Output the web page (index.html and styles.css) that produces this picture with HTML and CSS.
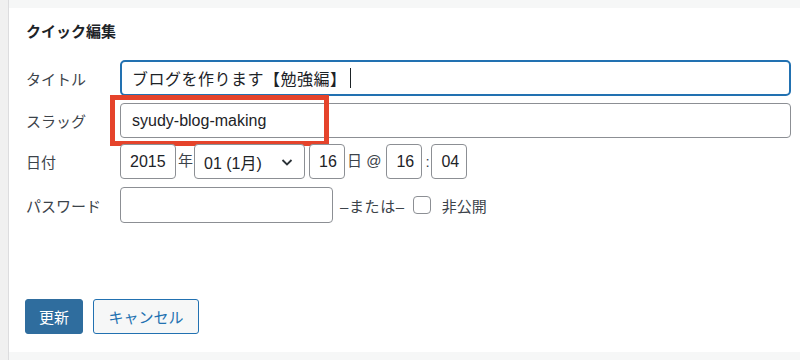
FILE: index.html
```html
<!DOCTYPE html>
<html lang="ja">
<head>
<meta charset="utf-8">
<title>クイック編集</title>
<link rel="stylesheet" href="styles.css">
</head>
<body>
<div class="page">
  <div class="side"></div>
  <div class="main">
    <div class="band"></div>
    <div class="panel">
      <h2 class="title">クイック編集</h2>
      <div class="row row-title">
        <span class="label">タイトル</span>
        <div class="field field-focus">ブログを作ります【勉強編】<span class="caret"></span></div>
      </div>
      <div class="row row-slug">
        <span class="label">スラッグ</span>
        <div class="field">syudy-blog-making</div>
        <div class="highlight"></div>
      </div>
      <div class="row row-date">
        <span class="label">日付</span>
        <div class="dates">
          <div class="field small w-year">2015</div>
          <span class="unit">年</span>
          <div class="field small select">01 (1月)
            <svg class="chev" width="14" height="14" viewBox="0 0 14 14"><path d="M2.5 5 L7 9.5 L11.5 5" fill="none" stroke="#2c3338" stroke-width="1.8"/></svg>
          </div>
          <div class="field small w-2">16</div>
          <span class="unit">日 @</span>
          <div class="field small w-2 ml">16</div>
          <span class="colon">:</span>
          <div class="field small w-2">04</div>
        </div>
      </div>
      <div class="row row-pass">
        <span class="label">パスワード</span>
        <div class="pass">
          <div class="field w-pass"></div>
          <span class="or">–または–</span>
          <span class="check"></span>
          <span class="priv">非公開</span>
        </div>
      </div>
      <div class="buttons">
        <button class="btn primary">更新</button>
        <button class="btn secondary">キャンセル</button>
      </div>
    </div>
    <div class="band bottom"></div>
  </div>
</div>
</body>
</html>
```
FILE: styles.css
```css
* { box-sizing: border-box; }
html, body { margin: 0; padding: 0; }
body {
  width: 800px;
  height: 360px;
  overflow: hidden;
  font-family: "Liberation Sans", "Noto Sans CJK JP", sans-serif;
  color: #3c434a;
  background: #f0f0f1;
}
.page { display: flex; height: 360px; }
.side {
  width: 9px;
  background: #f0f0f0;
  border-right: 1px solid #dcdcde;
}
.main { flex: 1; display: flex; flex-direction: column; }
.band { height: 8px; background: #f6f7f7; }
.band.bottom { flex: 1; }
.panel {
  height: 344px;
  background: #fff;
  padding: 0 9px 0 17px;
}
.title {
  margin: 0;
  padding-top: 14px;
  height: 52px;
  font-size: 15px;
  line-height: 20px;
  font-weight: 700;
  color: #1d2327;
}
.row {
  display: flex;
  align-items: center;
  position: relative;
}
.label {
  width: 94px;
  flex: none;
  font-size: 15px;
  color: #3c434a;
}
.field {
  flex: 1;
  height: 35px;
  border: 1px solid #8c8f94;
  border-radius: 4px;
  padding: 0 12px 0 11px;
  display: flex;
  align-items: center;
  font-size: 16px;
  color: #1d2327;
  background: #fff;
}
.field-focus {
  height: 36px;
  border: 2px solid #2271b1;
  border-radius: 5px;
  padding-left: 10px;
  letter-spacing: 0.5px;
}
.caret {
  display: inline-block;
  width: 1px;
  height: 20px;
  background: #1d2327;
  margin-left: 3px;
}
.row-title { height: 36px; }
.row-slug { margin-top: 7px; height: 35px; }
.highlight {
  position: absolute;
  left: 84px;
  top: -8px;
  width: 219px;
  height: 51px;
  border: 5px solid #e5432b;
}
.row-date { margin-top: 6px; height: 35px; }
.dates { display: flex; align-items: center; }
.small { flex: none; padding: 0 9px; }
.w-year { width: 56px; }
.w-2 { width: 36px; }
.select { width: 111px; margin-left: 1px; margin-right: 4px; position: relative; }
.chev { position: absolute; right: 10px; top: 10px; }
.unit { font-size: 15px; margin: 0 0 0 2px; color: #3c434a; align-self: flex-start; padding-top: 5px; }
.ml { margin-left: 5px; }
.colon { font-size: 15px; margin: 0 3px 0 3px; width: 3px; }
.row-pass { margin-top: 8px; height: 36px; }
.pass { display: flex; align-items: center; }
.w-pass { width: 213px; height: 36px; flex: none; }
.or { font-size: 15px; margin-left: 7px; color: #3c434a; letter-spacing: 0.6px; }
.check {
  width: 18px;
  height: 18px;
  border: 1px solid #8c8f94;
  border-radius: 4px;
  margin-left: 8px;
}
.priv { font-size: 15px; margin-left: 11px; }
.buttons {
  display: flex;
  gap: 10px;
  margin-top: 76px;
  margin-left: -1px;
}
.btn {
  height: 35px;
  border-radius: 3px;
  font-family: "Liberation Sans", "Noto Sans CJK JP", sans-serif;
  font-size: 15px;
  padding: 0 12px;
  border: 1px solid #2271b1;
}
.primary {
  width: 58px;
  background: #2f6d9e;
  border-color: #2f6d9e;
  color: #fff;
}
.secondary {
  width: 106px;
  background: #f6f7f7;
  color: #2271b1;
}
```
